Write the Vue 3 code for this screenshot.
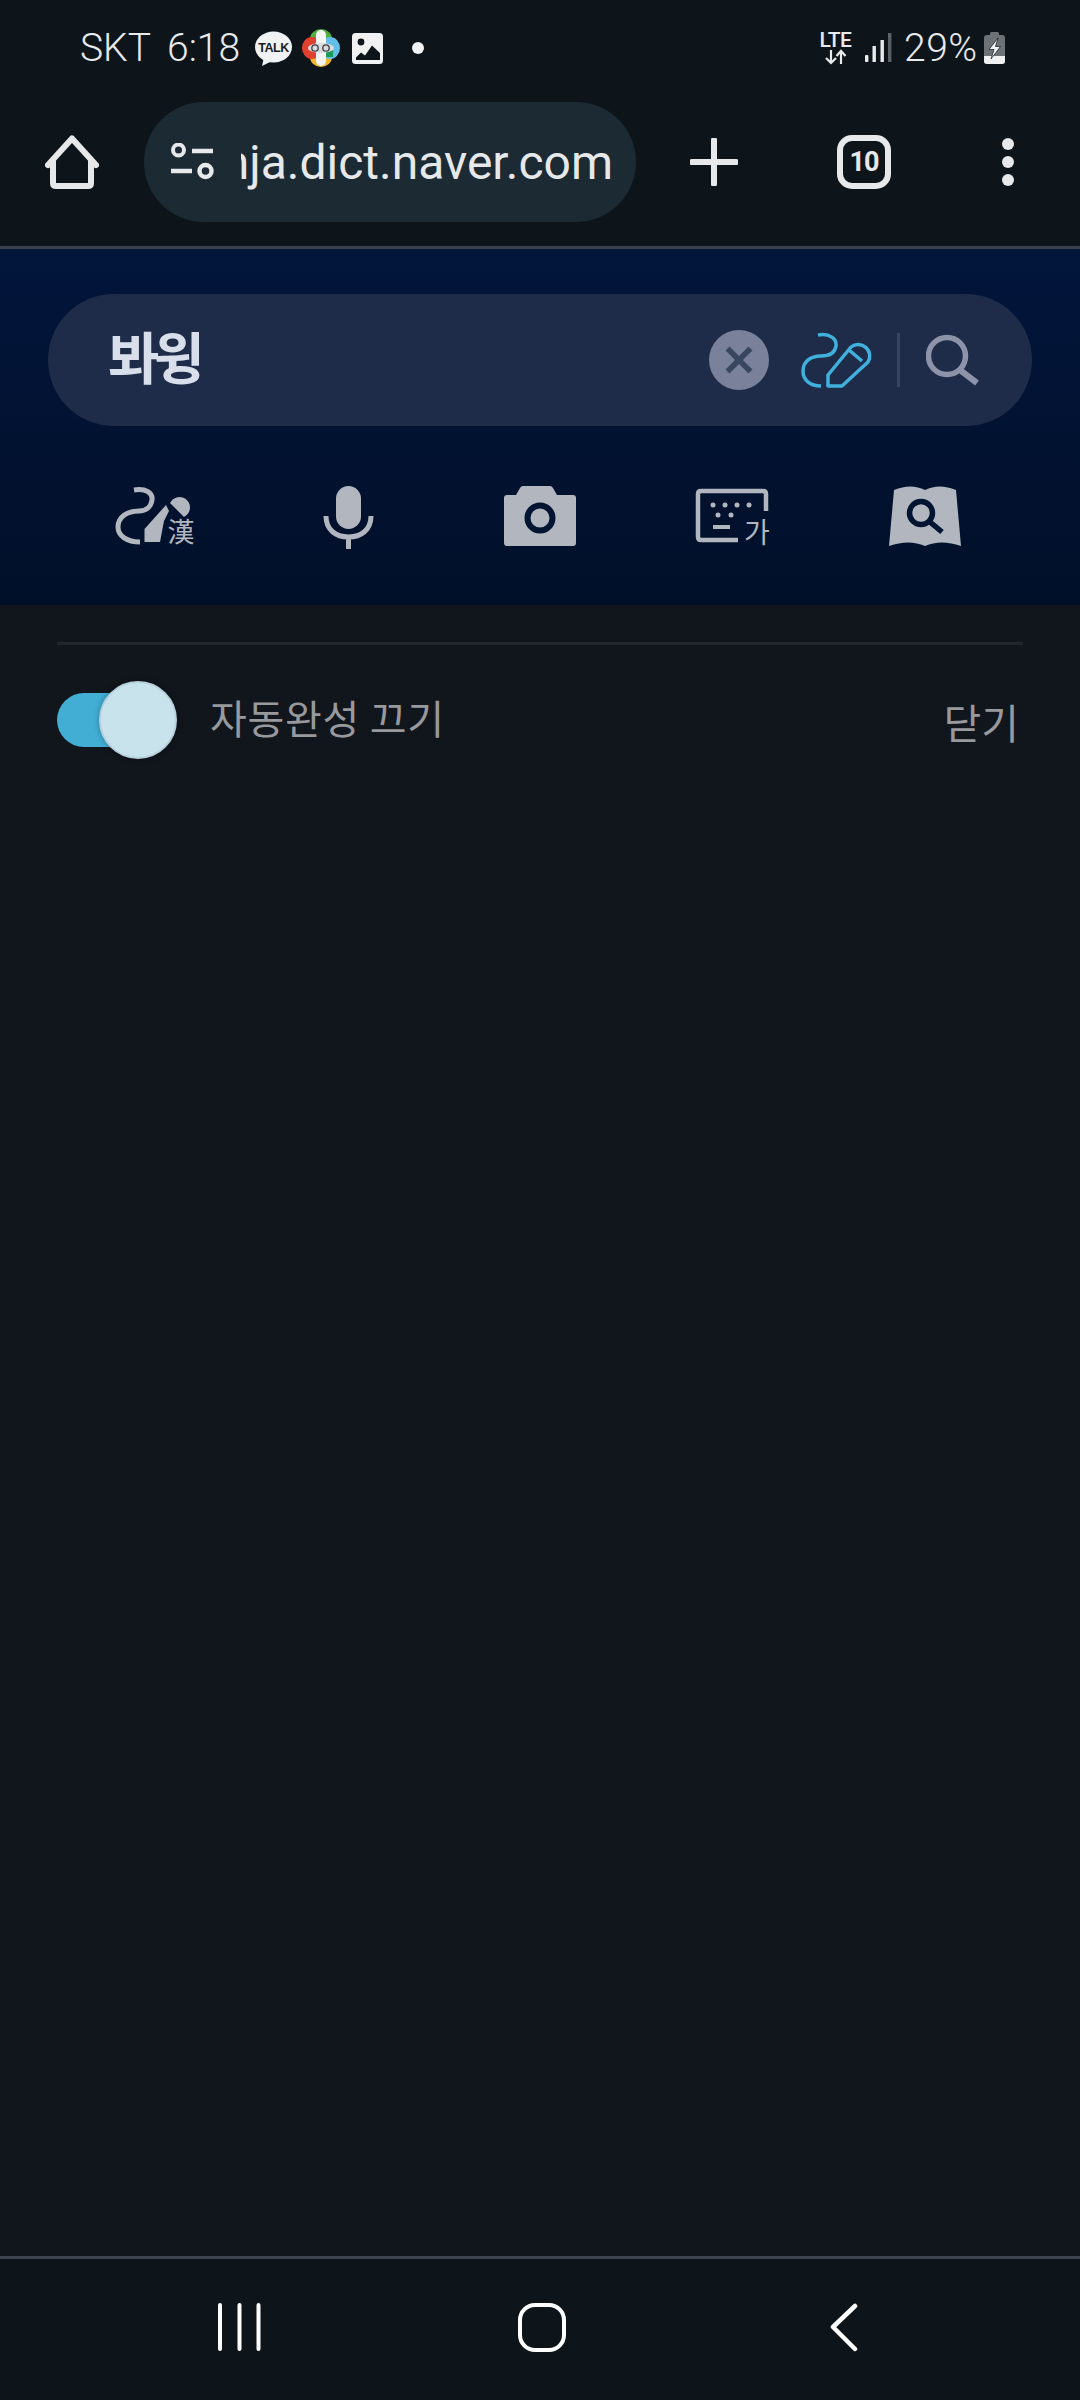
<script setup>
const tabCount = 10
</script>

<template>
  <div class="screen">
    <!-- status bar + browser toolbar -->
    <div class="top">
      <div class="status">
        <span class="carrier">SKT</span>
        <span class="clock">6:18</span>
        <svg class="ic-talk" viewBox="255 31 37 35" width="37" height="35">
          <ellipse cx="273.5" cy="47" rx="18.5" ry="15.5" fill="#f1f2f3" />
          <path d="M264 57 L262 66 L274 60 Z" fill="#f1f2f3" />
          <text x="273.5" y="52" class="talk-text" text-anchor="middle">TALK</text>
        </svg>
        <svg class="ic-flower" viewBox="302 29 38 38" width="38" height="38">
          <ellipse cx="321" cy="39" rx="11" ry="10" fill="#4fae3c" />
          <ellipse cx="321" cy="57" rx="11" ry="10" fill="#f2b52c" />
          <ellipse cx="312" cy="48" rx="10" ry="11" fill="#e2402e" />
          <ellipse cx="330" cy="48" rx="10" ry="11" fill="#63bfe8" />
          <rect x="316" y="30" width="10" height="36" rx="5" fill="#f4f4f4" />
          <rect x="326" y="50" width="7" height="7" fill="#1a9a58" />
          <ellipse cx="321" cy="48" rx="13" ry="5" fill="#d9dadc" />
          <circle cx="315" cy="48" r="3.2" fill="none" stroke="#3b3f44" stroke-width="1.3" />
          <circle cx="326" cy="48" r="3.2" fill="none" stroke="#3b3f44" stroke-width="1.3" />
        </svg>
        <svg class="ic-image" viewBox="352 33 31 31" width="31" height="31">
          <rect x="352" y="33" width="31" height="31" rx="3.5" fill="#f0f1f2" />
          <circle cx="361" cy="42" r="3.4" fill="#0e151a" />
          <path d="M356 60 V57.5 L361 52.5 L365 55.5 L372 45.5 L380 53 V60 Z" fill="#0e151a" />
        </svg>
        <span class="note-dot"></span>

        <div class="status-right">
          <div class="lte">
            <span class="lte-label">LTE</span>
            <svg viewBox="0 0 24 16" width="24" height="16">
              <path d="M7 1 V14 M2 9 L7 14 L12 9 M17 15 V2 M12.5 7 L17 2 L21.5 7" fill="none" stroke="#e8eaec" stroke-width="2.2" />
            </svg>
          </div>
          <svg class="ic-signal" viewBox="864 33 28 30" width="28" height="30">
            <rect x="865" y="55" width="3.4" height="7" rx="1" fill="#e8eaec" />
            <rect x="872.5" y="46" width="3.4" height="16" fill="#e8eaec" />
            <rect x="880.5" y="40" width="3.4" height="22" fill="#e8eaec" />
            <rect x="888" y="33" width="3.4" height="29" fill="#5c6165" />
          </svg>
          <span class="battery-pct">29%</span>
          <svg class="ic-battery" viewBox="984 32 21 32" width="21" height="32">
            <path d="M990 35 V33.5 Q990 32 991.5 32 H997.5 Q999 32 999 33.5 V35 H1002 Q1005 35 1005 38 V61 Q1005 64 1002 64 H987 Q984 64 984 61 V38 Q984 35 987 35 Z" fill="#6d7276" />
            <path d="M984 56 H1005 V61 Q1005 64 1002 64 H987 Q984 64 984 61 Z" fill="#eef0f1" />
            <path d="M998 38 L989 49.5 H994 L991 59 L1000.5 46.5 H995.5 Z" fill="#f1f2f3" stroke="#0e151a" stroke-width="0.7" />
          </svg>
        </div>
      </div>

      <div class="toolbar">
        <div class="tool-cell">
          <svg viewBox="45 135 54 54" width="54" height="54">
            <path d="M48 165 L72 138.5 L96 165 M53 160 V183 Q53 186 56 186 H88 Q91 186 91 183 V160" fill="none" stroke="#e6e8ea" stroke-width="6" stroke-linecap="round" stroke-linejoin="round" />
          </svg>
        </div>
        <div class="url-pill">
          <svg class="ic-tune" viewBox="170 144 44 38" width="44" height="38">
            <circle cx="178.5" cy="151" r="5.5" fill="none" stroke="#e6e8ea" stroke-width="4" />
            <path d="M192 152 H213 M171 172 H192" stroke="#e6e8ea" stroke-width="4.5" fill="none" />
            <circle cx="205.5" cy="172" r="6" fill="none" stroke="#e6e8ea" stroke-width="4.5" />
          </svg>
          <div class="url-clip"><span>hanja.dict.naver.com</span></div>
        </div>
        <div class="tool-cell">
          <svg viewBox="690 138 48 48" width="48" height="48">
            <path d="M692 162 H736 M714 140 V184" stroke="#e6e8ea" stroke-width="6" stroke-linecap="round" fill="none" />
          </svg>
        </div>
        <div class="tool-cell">
          <div class="tabs">{{ tabCount }}</div>
        </div>
        <div class="tool-cell">
          <div class="dots"><i></i><i></i><i></i></div>
        </div>
      </div>
    </div>

    <!-- dictionary search header -->
    <div class="search-head">
      <div class="search-pill">
        <span class="query">봐윙</span>
        <svg class="ic-clear" viewBox="710 329 60 60" width="60" height="60">
          <circle cx="740" cy="359" r="30" fill="#7a819a" />
          <path d="M728.5 347.5 L751.5 370.5 M751.5 347.5 L728.5 370.5" stroke="#3a4560" stroke-width="5.5" fill="none" />
        </svg>
        <svg class="ic-pen" viewBox="802 331 72 56" width="72" height="56">
          <path d="M819 334 C831 332 838 338 837 345 C836 352 830 355 822 355 C811 355 804 361 804 370 C804 379 811 385 822 385" fill="none" stroke="#3fb1dc" stroke-width="3.5" />
          <path d="M829 385 V374 L852 346 A11.5 11.5 0 0 1 869 361 L843 385 Z M850 349 L863 360" fill="none" stroke="#3fb1dc" stroke-width="3.5" stroke-linejoin="round" />
        </svg>
        <span class="pill-sep"></span>
        <svg class="ic-search" viewBox="926 334 54 52" width="54" height="52">
          <circle cx="947" cy="356" r="18.5" fill="none" stroke="#8d93a9" stroke-width="5.5" />
          <path d="M960 370 L977 383" stroke="#8d93a9" stroke-width="6" fill="none" />
        </svg>
      </div>

      <div class="mode-row">
        <div class="mode">
          <svg viewBox="115 486 80 62" width="80" height="62">
            <path d="M134 490 C146 488 153 493 152 500 C151 507 146 511 139 511 C127 511 118 517 118 527 C118 536 127 542 140 542" fill="none" stroke="#b2b6bf" stroke-width="5" />
            <path d="M144.5 542 V529 L166 505 L169 511 L164 521 L160 542 Z" fill="#b2b6bf" />
            <path d="M170 503 A10.5 10.5 0 1 1 184 517 Z" fill="#b2b6bf" />
            <text x="181" y="542" class="mode-han" text-anchor="middle">漢</text>
          </svg>
        </div>
        <div class="mode">
          <svg viewBox="318 486 60 62" width="60" height="62">
            <rect x="336" y="486" width="25" height="43" rx="12.5" fill="#b2b6bf" />
            <path d="M326 516 C326 530 336 537 348.500 537 C361 537 371 530 371 516 M348.500 537 V549" fill="none" stroke="#b2b6bf" stroke-width="5" />
          </svg>
        </div>
        <div class="mode">
          <svg viewBox="504 486 72 62" width="72" height="62">
            <path d="M507 495 H516 L520 488 Q521 486 523 486 H550 Q552 486 553 488 L557 495 H573 Q576 495 576 498 V543 Q576 546 573 546 H507 Q504 546 504 543 V498 Q504 495 507 495 Z" fill="#b2b6bf" />
            <circle cx="540" cy="518" r="12.5" fill="none" stroke="#011431" stroke-width="6" />
          </svg>
        </div>
        <div class="mode">
          <svg viewBox="694 486 78 62" width="78" height="62">
            <path d="M767 511 V494 Q767 491 764 491 H702 Q699 491 699 494 V537 Q699 540 702 540 H739" fill="none" stroke="#b2b6bf" stroke-width="4.500" />
            <g fill="#b2b6bf">
              <circle cx="714" cy="505" r="2.500" /><circle cx="726" cy="505" r="2.500" /><circle cx="738" cy="505" r="2.500" /><circle cx="750" cy="505" r="2.500" />
              <circle cx="719" cy="515" r="2.500" /><circle cx="732" cy="515" r="2.500" />
            </g>
            <path d="M714 527 H731" stroke="#b2b6bf" stroke-width="4" fill="none" />
            <text x="758" y="543" class="mode-ga" text-anchor="middle">가</text>
          </svg>
        </div>
        <div class="mode">
          <svg viewBox="888 486 72 62" width="72" height="62">
            <path d="M893 490 Q910 483 924 490 Q938 483 955 490 L960 546 Q940 539 924 546 Q908 539 888 546 Z" fill="#b2b6bf" />
            <circle cx="920" cy="513" r="11.500" fill="none" stroke="#011431" stroke-width="5.500" />
            <path d="M929 522 L941 532" stroke="#011431" stroke-width="5.500" fill="none" />
          </svg>
        </div>
      </div>
    </div>

    <!-- autocomplete panel -->
    <div class="panel">
      <div class="panel-line"></div>
      <div class="auto-row">
        <div class="toggle">
          <span class="toggle-track"></span>
          <span class="toggle-knob"></span>
        </div>
        <span class="auto-label">자동완성 끄기</span>
        <span class="auto-close">닫기</span>
      </div>
    </div>

    <!-- android nav bar -->
    <div class="navbar">
      <div class="nav-cell">
        <svg viewBox="216 2303 48 48" width="48" height="48">
          <path d="M220 2305 V2349 M239.500 2305 V2349 M258.500 2305 V2349" stroke="#fff" stroke-width="4" stroke-linecap="round" fill="none" />
        </svg>
      </div>
      <div class="nav-cell">
        <svg viewBox="516 2301 50 50" width="50" height="50">
          <rect x="519" y="2304" width="44" height="45" rx="15" fill="none" stroke="#fff" stroke-width="4" />
        </svg>
      </div>
      <div class="nav-cell">
        <svg viewBox="820 2301 50 50" width="50" height="50">
          <path d="M856 2305 L834 2326 L856 2348" fill="none" stroke="#fff" stroke-width="4.500" stroke-linecap="round" stroke-linejoin="round" />
        </svg>
      </div>
    </div>
  </div>
</template>

<style scoped>
.screen {
  width: 1080px;
  height: 2400px;
  display: flex;
  flex-direction: column;
  background: #11151c;
  font-family: Roboto, "Noto Sans CJK KR", sans-serif;
  overflow: hidden;
}

.top {
  height: 249px;
  box-sizing: border-box;
  background: #0e151a;
  border-bottom: 3px solid #3a424c;
  color: #e8eaec;
}

/* status bar */
.status {
  height: 96px;
  display: flex;
  align-items: center;
  padding: 0 75px 0 80px;
  font-size: 39px;
  font-weight: 300;
}
.carrier { width: 87px; }
.clock { width: 88px; }
.ic-talk { margin-right: 10px; }
.ic-flower { margin-right: 12px; }
.ic-image { margin-right: 29px; }
.talk-text {
  font-family: "Liberation Sans", sans-serif;
  font-size: 12.5px;
  font-weight: 700;
  fill: #1a1d20;
  letter-spacing: -0.5px;
}
.note-dot {
  width: 12px;
  height: 12px;
  border-radius: 50%;
  background: #f1f2f3;
}
.status-right {
  margin-left: auto;
  display: flex;
  align-items: center;
}
.lte {
  width: 33px;
  display: flex;
  flex-direction: column;
  align-items: center;
  margin-right: 12px;
}
.lte-label {
  font-size: 21px;
  font-weight: 500;
  line-height: 18px;
  letter-spacing: -0.5px;
}
.ic-signal { margin-right: 12px; }
.battery-pct {
  width: 80px;
  letter-spacing: 0.5px;
}

/* browser toolbar */
.toolbar {
  height: 120px;
  padding-top: 6px;
  display: grid;
  grid-template-columns: 144px 492px 156px 144px 144px;
}
.tool-cell {
  display: flex;
  align-items: center;
  justify-content: center;
}
.url-pill {
  display: flex;
  align-items: center;
  height: 120px;
  background: #1c2a33;
  border-radius: 60px;
  padding-left: 26px;
  box-sizing: border-box;
}
.url-clip {
  width: 372px;
  margin-left: 27px;
  overflow: hidden;
  display: flex;
  justify-content: flex-end;
  white-space: nowrap;
  font-size: 48px;
  color: #e6e8ea;
}
.tabs {
  width: 54px;
  height: 54px;
  box-sizing: border-box;
  border: 6px solid #e6e8ea;
  border-radius: 15px;
  display: flex;
  align-items: center;
  justify-content: center;
  font-size: 27px;
  font-weight: 700;
  letter-spacing: -1px;
  color: #e6e8ea;
}
.dots {
  display: flex;
  flex-direction: column;
  gap: 6px;
}
.dots i {
  width: 12px;
  height: 12px;
  border-radius: 50%;
  background: #e6e8ea;
}

/* search header */
.search-head {
  height: 356px;
  box-sizing: border-box;
  padding: 45px 48px 0;
  background: linear-gradient(180deg, #02153b 0%, #011029 100%);
}
.search-pill {
  height: 132px;
  border-radius: 66px;
  background: #1e2c4a;
  display: flex;
  align-items: center;
  padding: 0 52px 0 60px;
}
.query {
  flex: 1;
  font-family: "Noto Sans CJK KR", sans-serif;
  font-size: 56px;
  font-weight: 700;
  letter-spacing: -6px;
  color: #d9deeb;
  margin-top: -12px;
}
.ic-clear { margin-right: 32px; }
.pill-sep {
  width: 3px;
  height: 54px;
  background: #3a445e;
  margin: 0 26px 0 24px;
}

.mode-row {
  display: grid;
  grid-template-columns: repeat(5, 1fr);
  margin: 60px 11px 0;
}
.mode {
  height: 62px;
  display: flex;
  justify-content: center;
}
.mode svg {
  overflow: visible;
}
.mode-han {
  font-family: "Noto Sans CJK KR", sans-serif;
  font-size: 27px;
  fill: #b2b6bf;
}
.mode-ga {
  font-family: "Noto Sans CJK KR", sans-serif;
  font-size: 28px;
  fill: #b2b6bf;
}

/* autocomplete row */
.panel {
  flex: 1;
  padding: 37px 57px 0;
}
.panel-line {
  height: 3px;
  background: #23272d;
}
.auto-row {
  height: 150px;
  display: flex;
  align-items: center;
}
.toggle {
  position: relative;
  width: 120px;
  height: 78px;
  margin-right: 33px;
}
.toggle-track {
  position: absolute;
  left: 0;
  top: 12px;
  width: 96px;
  height: 54px;
  border-radius: 27px;
  background: #42aed4;
}
.toggle-knob {
  position: absolute;
  right: 0;
  top: 0;
  width: 78px;
  height: 78px;
  box-sizing: border-box;
  border-radius: 50%;
  background: #c9e3ec;
  border: 2px solid #b7d2dc;
  box-shadow: 0 0 6px rgba(0, 0, 0, 0.3);
}
.auto-label {
  font-family: "Noto Sans CJK KR", sans-serif;
  font-size: 40px;
  letter-spacing: 0.7px;
  color: #97999d;
  margin-top: -7px;
}
.auto-close {
  margin-left: auto;
  font-family: "Noto Sans CJK KR", sans-serif;
  font-size: 41px;
  color: #97999d;
  margin-top: 2px;
  margin-right: 4px;
}

/* nav bar */
.navbar {
  height: 144px;
  box-sizing: border-box;
  border-top: 3px solid #3e444c;
  background: #0e151a;
  padding: 0 0 6px 89px;
  display: grid;
  grid-template-columns: repeat(3, 302px);
  align-items: center;
}
.nav-cell {
  display: flex;
  justify-content: center;
}
</style>
